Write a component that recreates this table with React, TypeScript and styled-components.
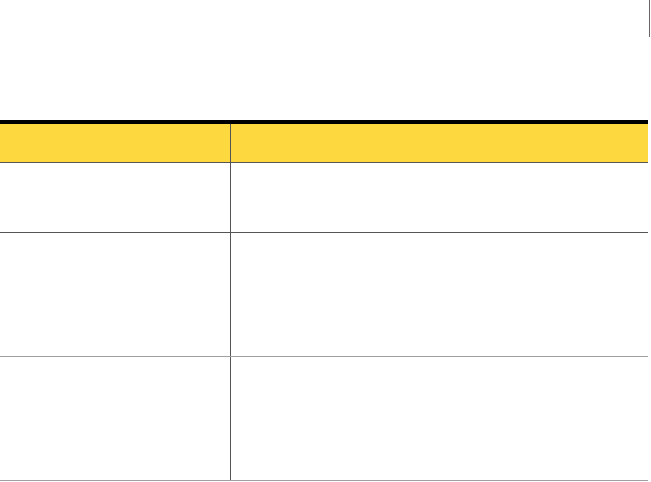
import React from 'react';
import styled, { createGlobalStyle } from 'styled-components';

const GlobalStyle = createGlobalStyle`
  body {
    margin: 0;
    background: #ffffff;
    font-family: 'Liberation Sans', Arial, sans-serif;
  }
`;

const Page = styled.div`
  width: 651px;
  height: 482px;
  overflow: hidden;
`;

const TopBar = styled.div`
  height: 120px;
  display: flex;
  justify-content: flex-end;
  align-items: flex-start;
`;

const Marker = styled.div`
  width: 1px;
  height: 37px;
  margin-right: 1px;
  background: #666666;
`;

const Table = styled.div`
  width: 648px;
  border-top: 4px solid #000000;
`;

const Row = styled.div<{ $height: number; $line: string; $head?: boolean }>`
  display: grid;
  grid-template-columns: 231px 1fr;
  box-sizing: border-box;
  height: ${(p) => p.$height}px;
  border-bottom: 1px solid ${(p) => p.$line};
  background: ${(p) => (p.$head ? '#fdd83f' : 'transparent')};
`;

const Cell = styled.div`
  box-sizing: border-box;
  font-size: 13px;
  color: #222222;
  padding: 8px 10px;
  &:first-child {
    border-right: 1px solid #555555;
  }
`;

const rows = [
  { height: 70, line: '#555555' },
  { height: 124, line: '#a0a0a0' },
  { height: 124, line: '#a0a0a0' },
];

export default function App() {
  return (
    <Page>
      <GlobalStyle />
      <TopBar>
        <Marker />
      </TopBar>
      <Table>
        <Row $height={39} $line="#555555" $head>
          <Cell />
          <Cell />
        </Row>
        {rows.map((r, i) => (
          <Row key={i} $height={r.height} $line={r.line}>
            <Cell />
            <Cell />
          </Row>
        ))}
      </Table>
    </Page>
  );
}
